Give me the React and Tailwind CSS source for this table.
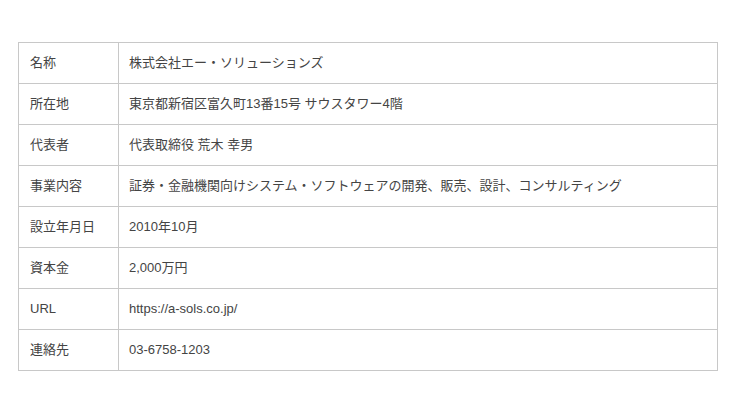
import React from 'react';

// 会社概要テーブル
const rows = [
  ['名称', '株式会社エー・ソリューションズ'],
  ['所在地', '東京都新宿区富久町13番15号 サウスタワー4階'],
  ['代表者', '代表取締役 荒木 幸男'],
  ['事業内容', '証券・金融機関向けシステム・ソフトウェアの開発、販売、設計、コンサルティング'],
  ['設立年月日', '2010年10月'],
  ['資本金', '2,000万円'],
  ['URL', 'https://a-sols.co.jp/'],
  ['連絡先', '03-6758-1203'],
];

export default function App() {
  return (
    <div
      className="min-h-screen bg-white pt-[42px] pl-[18px]"
      style={{ fontFamily: '"Liberation Sans", "Noto Sans CJK JP", sans-serif' }}
    >
      <table className="w-[700px] border-collapse text-[13px] text-[#444]">
        <tbody>
          {rows.map(([label, value]) => (
            <tr key={label} className="h-[41px]">
              <td className="w-[100px] border border-[#c8c8c8] pl-[11px] align-middle">{label}</td>
              <td className="border border-[#c8c8c8] pl-[10px] align-middle">{value}</td>
            </tr>
          ))}
        </tbody>
      </table>
    </div>
  );
}
